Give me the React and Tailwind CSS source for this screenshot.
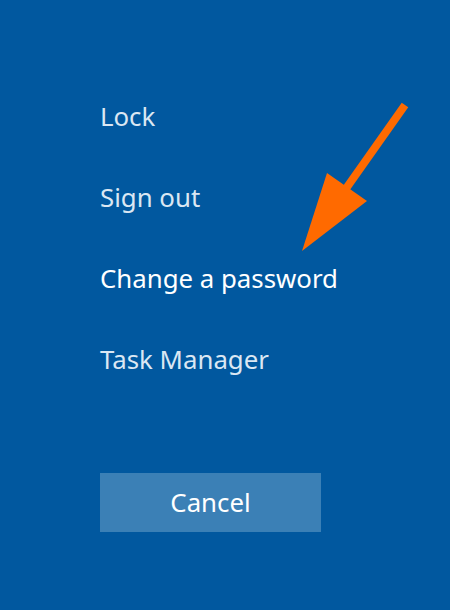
export default function App() {
  const items = ["Lock", "Sign out", "Change a password", "Task Manager"];
  return (
    <div className="relative w-[450px] h-[610px] bg-[#01589f] overflow-hidden" style={{ fontFamily: '"Noto Sans", "Open Sans", sans-serif' }}>
      <div className="flex flex-col pl-[100px] pt-[96px]">
        {items.map((t, i) => (
          <div
            key={t}
            className={`h-[81px] text-[25.8px] leading-[40px] ${i === 2 ? "text-white" : "text-[#dbe7f3]"}`}
          >
            {t}
          </div>
        ))}
        <div className="mt-[53px] w-[221px] h-[59px] bg-[#3b80b6] flex items-center justify-center text-[25.8px] text-white">
          Cancel
        </div>
      </div>
      <svg className="absolute left-0 top-0" width="450" height="610" viewBox="0 0 450 610">
        <line x1="405" y1="105" x2="345" y2="190" stroke="#ff6a00" strokeWidth="8" />
        <polygon points="302,251 327,173 367,201" fill="#ff6a00" />
      </svg>
    </div>
  );
}
